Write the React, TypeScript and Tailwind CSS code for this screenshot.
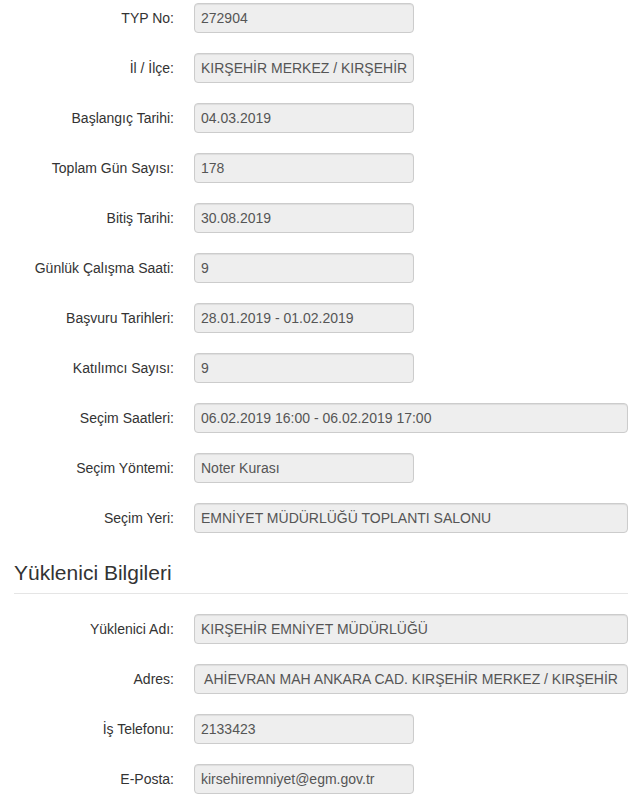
import React from "react";

type Row = { label: string; value: string; wide?: boolean };

const section1: Row[] = [
  { label: "TYP No:", value: "272904" },
  { label: "İl / İlçe:", value: "KIRŞEHİR MERKEZ / KIRŞEHİR" },
  { label: "Başlangıç Tarihi:", value: "04.03.2019" },
  { label: "Toplam Gün Sayısı:", value: "178" },
  { label: "Bitiş Tarihi:", value: "30.08.2019" },
  { label: "Günlük Çalışma Saati:", value: "9" },
  { label: "Başvuru Tarihleri:", value: "28.01.2019 - 01.02.2019" },
  { label: "Katılımcı Sayısı:", value: "9" },
  { label: "Seçim Saatleri:", value: "06.02.2019 16:00 - 06.02.2019 17:00", wide: true },
  { label: "Seçim Yöntemi:", value: "Noter Kurası" },
  { label: "Seçim Yeri:", value: "EMNİYET MÜDÜRLÜĞÜ TOPLANTI SALONU", wide: true },
];

const section2: Row[] = [
  { label: "Yüklenici Adı:", value: "KIRŞEHİR EMNİYET MÜDÜRLÜĞÜ", wide: true },
  { label: "Adres:", value: " AHİEVRAN MAH ANKARA CAD. KIRŞEHİR MERKEZ / KIRŞEHİR", wide: true },
  { label: "İş Telefonu:", value: "2133423" },
  { label: "E-Posta:", value: "kirsehiremniyet@egm.gov.tr" },
];

function FieldRow({ row }: { row: Row }) {
  return (
    <div className="flex items-center mb-[20px]">
      <div className="w-[160px] text-right text-[14px] text-[#333] leading-[20px] shrink-0">{row.label}</div>
      <div className="ml-[20px]">
        <div
          className={`${row.wide ? "w-[434px]" : "w-[220px]"} h-[30px] flex items-center bg-[#eeeeee] border border-[#cccccc] rounded-[4px] px-[6px] text-[14px] text-[#555] whitespace-pre overflow-hidden shadow-[inset_0_1px_1px_rgba(0,0,0,0.075)]`}
        >
          {row.value}
        </div>
      </div>
    </div>
  );
}

export default function App() {
  return (
    <div className="w-[632px] h-[808px] bg-white pl-[14px] pr-[4px] pt-[3px] overflow-hidden" style={{ fontFamily: '"Liberation Sans", Arial, sans-serif' }}>
      {section1.map((r, i) => (
        <FieldRow key={i} row={r} />
      ))}
      <div className="pt-[9px] border-b border-[#e5e5e5] pb-[9px] mb-[20px]">
        <h3 className="text-[21px] leading-[22px] text-[#333] font-normal">Yüklenici Bilgileri</h3>
      </div>
      {section2.map((r, i) => (
        <FieldRow key={i} row={r} />
      ))}
    </div>
  );
}
